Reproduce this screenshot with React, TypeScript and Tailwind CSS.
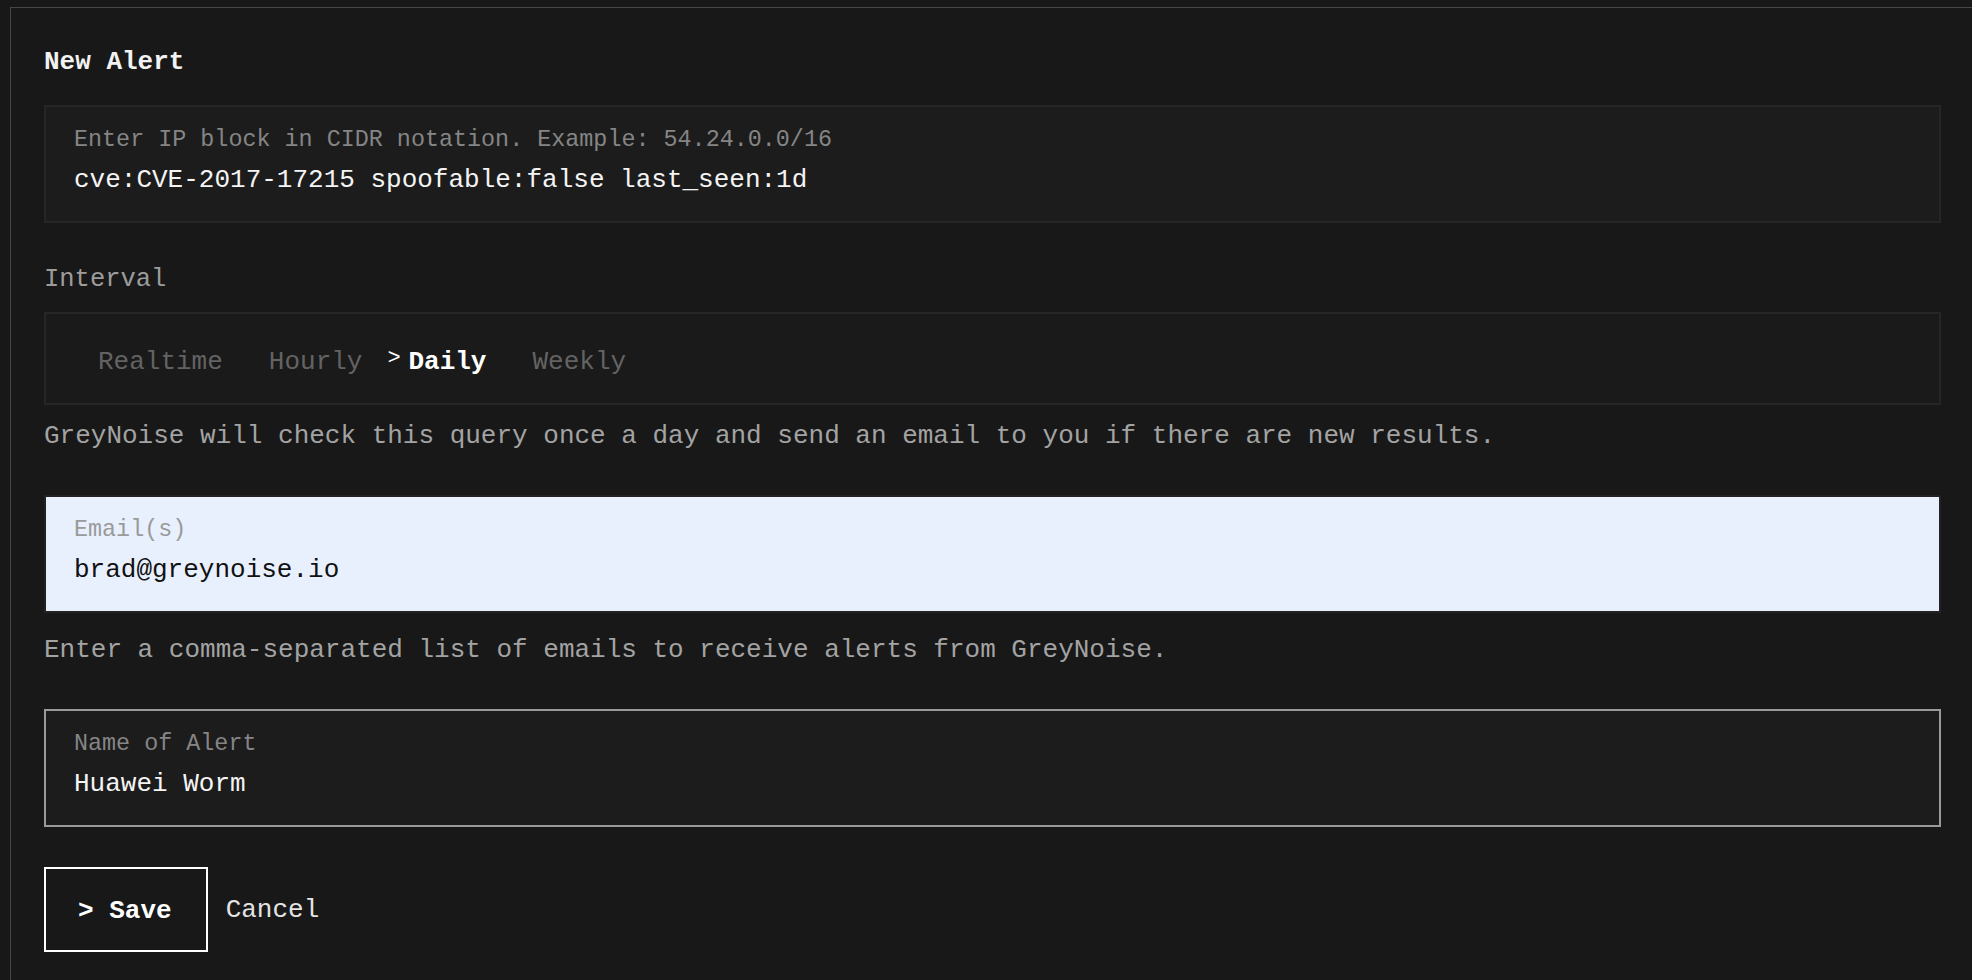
import React from "react";

function Field({
  label,
  value,
  variant,
}: {
  label: string;
  value: string;
  variant: "dark" | "autofill" | "focus";
}) {
  const box =
    variant === "autofill"
      ? "border-2 border-[#222222] bg-[#e8f0fe]"
      : variant === "focus"
      ? "border-2 border-[#9a9a9a] bg-[#1c1c1c]"
      : "border-2 border-[#262626] bg-[#1c1c1c]";
  const labelColor =
    variant === "autofill" ? "text-[#9a9a9a]" : "text-[#858585]";
  const valueColor = variant === "autofill" ? "text-[#111111]" : "text-[#f4f4f4]";
  return (
    <div className={`${box} px-[28px] pt-[18px] pb-[26px]`}>
      <div className={`text-[23.4px] leading-[30px] ${labelColor}`}>{label}</div>
      <div className={`mt-[10px] text-[26px] leading-[30px] ${valueColor}`}>{value}</div>
    </div>
  );
}

function Tab({ label, active }: { label: string; active?: boolean }) {
  return (
    <div className="flex items-start">
      <span
        className={`relative -top-[3px] w-[21px] text-[22px] leading-[30px] ${
          active ? "text-white" : "text-transparent"
        }`}
      >
        {">"}
      </span>
      <span
        className={`text-[26px] leading-[30px] ${
          active ? "font-bold text-white" : "text-[#636363]"
        }`}
      >
        {label}
      </span>
    </div>
  );
}

export default function App() {
  return (
    <div className="h-screen overflow-hidden bg-[#181818] pl-[10px] pt-[7px] font-['Liberation_Mono',monospace]">
      <div className="h-full border-l border-t border-[#474747] pl-[33px] pr-[31px]">
        <h1 className="pt-[39px] text-[26px] font-bold leading-[30px] text-[#f2f2f2]">
          New Alert
        </h1>

        <div className="mt-[28px]">
          <Field
            label="Enter IP block in CIDR notation. Example: 54.24.0.0/16"
            value="cve:CVE-2017-17215 spoofable:false last_seen:1d"
            variant="dark"
          />
        </div>

        <div className="mt-[42px] text-[25.5px] leading-[30px] text-[#9c9c9c]">Interval</div>

        <div className="mt-[17px] border-2 border-[#262626] bg-[#1a1a1a] pl-[31px] pt-[33px] pb-[26px]">
          <div className="flex gap-[25px]">
            <Tab label="Realtime" />
            <Tab label="Hourly" />
            <Tab label="Daily" active />
            <Tab label="Weekly" />
          </div>
        </div>

        <p className="mt-[16px] text-[26px] leading-[30px] text-[#a3a3a3]">
          GreyNoise will check this query once a day and send an email to you if there are new results.
        </p>

        <div className="mt-[44px]">
          <Field label="Email(s)" value="brad@greynoise.io" variant="autofill" />
        </div>

        <p className="mt-[22px] text-[26px] leading-[30px] text-[#a3a3a3]">
          Enter a comma-separated list of emails to receive alerts from GreyNoise.
        </p>

        <div className="mt-[44px]">
          <Field label="Name of Alert" value="Huawei Worm" variant="focus" />
        </div>

        <div className="mt-[40px] flex items-center">
          <button className="border-2 border-white bg-transparent pl-[32px] pr-[34px] pt-[27px] pb-[24px] text-[26px] font-bold leading-[30px] text-white">
            {"> Save"}
          </button>
          <button className="ml-[18px] bg-transparent text-[26px] leading-[30px] text-[#e4e4e4]">
            Cancel
          </button>
        </div>
      </div>
    </div>
  );
}
